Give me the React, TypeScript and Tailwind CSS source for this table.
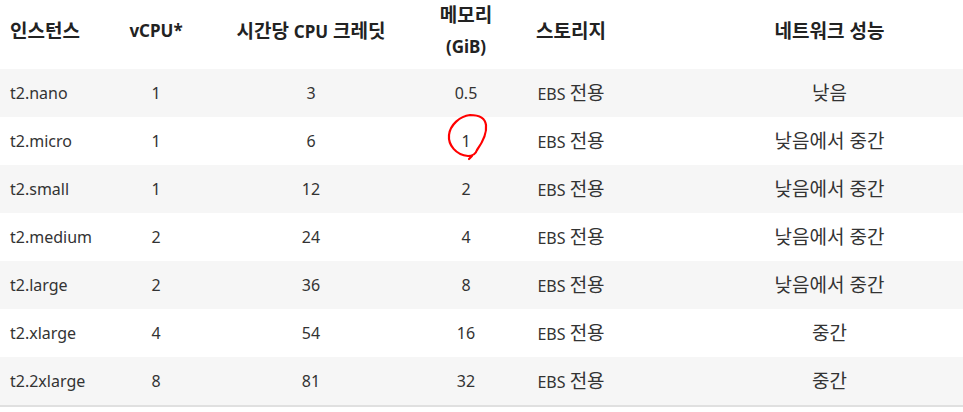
const rows = [
  ["t2.nano", "1", "3", "0.5", "전용", "낮음"],
  ["t2.micro", "1", "6", "1", "전용", "낮음에서 중간"],
  ["t2.small", "1", "12", "2", "전용", "낮음에서 중간"],
  ["t2.medium", "2", "24", "4", "전용", "낮음에서 중간"],
  ["t2.large", "2", "36", "8", "전용", "낮음에서 중간"],
  ["t2.xlarge", "4", "54", "16", "전용", "중간"],
  ["t2.2xlarge", "8", "81", "32", "전용", "중간"],
];

const cols = "grid grid-cols-[100px_112px_198px_112px_98px_1fr]";

function Circle() {
  return (
    <svg className="pointer-events-none absolute left-[36px] top-[-4px]" width="44" height="48" viewBox="0 0 44 48" fill="none">
      <path
        d="M31 37 C36 30 41 20 40 12 C39 4 31 2 24 2 C14 3 4 12 3 22 C2 32 10 42 22 43 C27 43 30 40 31 37 M26 43 L23 46"
        stroke="#f00"
        strokeWidth="2.2"
        strokeLinecap="round"
        strokeLinejoin="round"
      />
    </svg>
  );
}

export default function App() {
  return (
    <div className="h-[412px] w-[963px] bg-white text-[#333] font-['Noto_Sans','Noto_Sans_CJK_KR',sans-serif]">
      <div className={`${cols} h-[69px] items-center pb-[7px] text-[19px] font-bold text-[#222]`}>
        <div className="pl-[10px]">인스턴스</div>
        <div className="text-center text-[17px]">vCPU*</div>
        <div className="text-center">
          시간당 <span className="text-[17px]">CPU</span> 크레딧
        </div>
        <div className="text-center leading-[31px]">
          메모리
          <br />
          <span className="text-[17px]">(GiB)</span>
        </div>
        <div className="text-center">스토리지</div>
        <div className="pl-[76px] text-center">네트워크 성능</div>
      </div>
      <div className="border-b-2 border-[#e0e0e0]">
        {rows.map((r, i) => (
          <div key={i} className={`${cols} h-[48px] items-center text-[16px] ${i % 2 === 0 ? "bg-[#f6f6f6]" : "bg-white"}`}>
            <div className="pl-[10px]">{r[0]}</div>
            <div className="text-center">{r[1]}</div>
            <div className="text-center">{r[2]}</div>
            <div className="relative flex items-center justify-center self-stretch">
              {r[3]}
              {i === 1 && <Circle />}
            </div>
            <div className="text-center">
              EBS <span className="text-[19px]">{r[4]}</span>
            </div>
            <div className="pl-[76px] text-center text-[19px]">{r[5]}</div>
          </div>
        ))}
      </div>
    </div>
  );
}
